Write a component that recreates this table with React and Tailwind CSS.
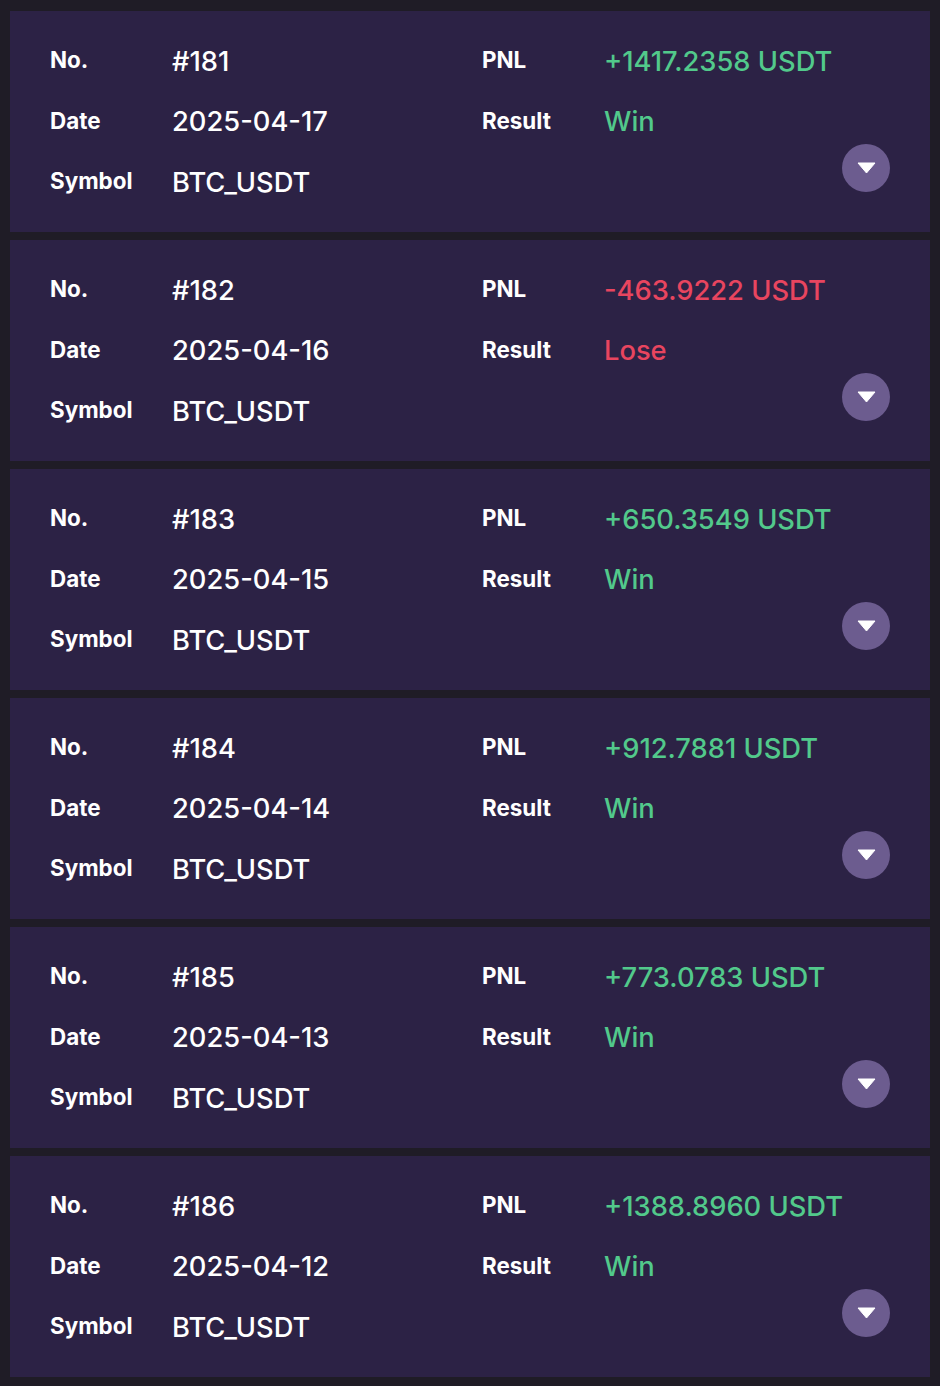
import React from "react";

const rows = [
  { no: "#181", date: "2025-04-17", pnl: "+1417.2358 USDT", win: true },
  { no: "#182", date: "2025-04-16", pnl: "-463.9222 USDT", win: false },
  { no: "#183", date: "2025-04-15", pnl: "+650.3549 USDT", win: true },
  { no: "#184", date: "2025-04-14", pnl: "+912.7881 USDT", win: true },
  { no: "#185", date: "2025-04-13", pnl: "+773.0783 USDT", win: true },
  { no: "#186", date: "2025-04-12", pnl: "+1388.8960 USDT", win: true },
];

function Field({ label, value, color }) {
  return (
    <div className="flex h-[60.5px] items-center whitespace-nowrap">
      <div className="w-[122px] shrink-0 mb-[4px] text-[22.4px] font-bold text-white">{label}</div>
      <div className={`text-[27.3px] font-medium ${color}`}>{value}</div>
    </div>
  );
}

function Card({ r }) {
  const c = r.win ? "text-[#52c98b]" : "text-[#e8455f]";
  return (
    <div className="flex h-[221px] bg-[#2c2245] pl-10 pr-10 pt-[21px]">
      <div className="w-[432px] shrink-0 flex flex-col">
        <Field label="No." value={r.no} color="text-white" />
        <Field label="Date" value={r.date} color="text-white" />
        <Field label="Symbol" value="BTC_USDT" color="text-white" />
      </div>
      <div className="flex-1 min-w-0 flex flex-col">
        <Field label="PNL" value={r.pnl} color={c} />
        <Field label="Result" value={r.win ? "Win" : "Lose"} color={c} />
      </div>
      <div className="self-end mb-10 shrink-0 w-12 h-12 rounded-full bg-[#6c5c8f] flex items-center justify-center">
        <svg width="19" height="12" viewBox="0 0 19 12">
          <path d="M1 1 L18 1 L9.5 11 Z" fill="#ffffff" stroke="#ffffff" strokeWidth="1" strokeLinejoin="round" />
        </svg>
      </div>
    </div>
  );
}

export default function App() {
  return (
    <div
      className="min-h-[1386px] bg-[#1f1c26] px-[10px] pt-[11px] pb-[9px] flex flex-col gap-2"
      style={{ fontFamily: "Inter, 'Noto Sans', sans-serif" }}
    >
      {rows.map((r) => (
        <Card key={r.no} r={r} />
      ))}
    </div>
  );
}
